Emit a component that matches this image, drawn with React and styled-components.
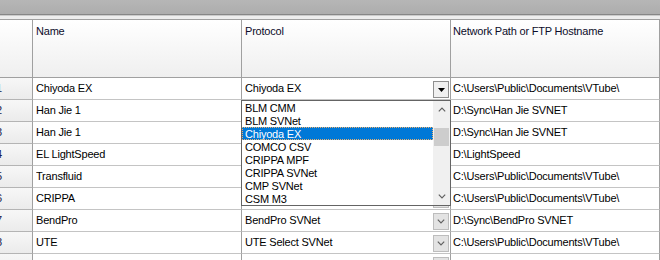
import React from 'react';
import styled, { createGlobalStyle } from 'styled-components';

const GlobalStyle = createGlobalStyle`
  html, body { margin: 0; padding: 0; overflow: hidden; background: #ffffff; }
  body {
    font-family: "Liberation Sans", Arial, sans-serif;
    font-size: 11px;
    letter-spacing: -0.2px;
    color: #000;
  }
  * { box-sizing: border-box; }
`;

const Screen = styled.div`
  width: 660px;
  height: 260px;
  overflow: hidden;
  display: flex;
  flex-direction: column;
  background: #fff;
`;

const TopStrip = styled.div`
  flex: none;
  height: 15px;
  background: linear-gradient(#b6b6b6, #adadad);
  border-bottom: 1px solid #868686;
`;

const Gutter = styled.div`
  flex: none;
  height: 4px;
  background: #ededed;
  border-top: 1px solid #cbcbcb;
`;

const Grid = styled.div`
  flex: none;
  display: grid;
  grid-template-columns: 33px 209px 209px 1fr;
  grid-template-rows: 58px;
  grid-auto-rows: 22px;
  border-top: 1px solid #a0a0a0;
`;

const HeaderCell = styled.div`
  background: linear-gradient(#ffffff, #efefef);
  border-right: 1px solid #a0a0a0;
  border-bottom: 1px solid #a0a0a0;
  padding: 4px 2px 0 ${p => p.$pad ?? 3}px;
  line-height: 14px;
  color: #0c0c2a;
  white-space: nowrap;
  overflow: hidden;
`;

const RowHeader = styled.div`
  background: linear-gradient(#f7f7f7, #ebebeb);
  border-right: 1px solid #a0a0a0;
  border-bottom: 1px solid #b4b4b4;
  line-height: 20px;
  overflow: hidden;
  white-space: nowrap;
  color: #18184a;
`;

const RowNumber = styled.span`
  display: inline-block;
  margin-left: -4px;
`;

const Cell = styled.div`
  position: relative;
  display: flex;
  align-items: flex-start;
  background: #ffffff;
  border-right: 1px solid #a0a0a0;
  border-bottom: 1px solid #c4c4c4;
  padding-left: ${p => p.$pad ?? 3}px;
`;

const CellText = styled.span`
  flex: 1;
  min-width: 0;
  line-height: 20px;
  white-space: nowrap;
  overflow: hidden;
`;

const DropButton = styled.div`
  flex: none;
  align-self: flex-end;
  width: 16px;
  height: 17px;
  margin: 0 1px 1px 0;
  display: flex;
  align-items: center;
  justify-content: center;
  background: ${p => (p.$active ? '#f0f0f0' : '#e3e3e3')};
  border: 1px solid ${p => (p.$active ? '#8f8f8f' : '#bdbdbd')};
`;

const DropList = styled.div`
  position: absolute;
  left: -1px;
  top: 22px;
  width: 210px;
  height: 106px;
  z-index: 5;
  display: flex;
  background: #ffffff;
  border: 1px solid #646464;
`;

const Items = styled.div`
  flex: 1;
  display: flex;
  flex-direction: column;
  min-width: 0;
`;

const Item = styled.div`
  height: 13px;
  padding: 1px 0 0 3px;
  line-height: 12px;
  white-space: nowrap;
  overflow: hidden;
  color: ${p => (p.$selected ? '#ffffff' : '#000000')};
  background: ${p => (p.$selected ? '#0078d7' : 'transparent')};
  outline: ${p => (p.$selected ? '1px dotted #e8b070' : 'none')};
  outline-offset: -1px;
`;

const ScrollBar = styled.div`
  flex: none;
  width: 17px;
  display: flex;
  flex-direction: column;
  background: #f0f0f0;
`;

const ScrollArrow = styled.div`
  flex: none;
  height: 17px;
  display: flex;
  align-items: center;
  justify-content: center;
`;

const Track = styled.div`
  flex: 1;
`;

const Thumb = styled.div`
  margin: 10px 1px 0;
  height: 18px;
  background: #cdcdcd;
`;

const Chevron = ({ up, color = '#606060' }) => (
  <svg width="8" height="5" viewBox="0 0 8 5">
    <polyline
      points={up ? '0.8,4.3 4,1.1 7.2,4.3' : '0.8,0.7 4,3.9 7.2,0.7'}
      fill="none"
      stroke={color}
      strokeWidth="1.2"
    />
  </svg>
);

const Triangle = () => (
  <svg width="7" height="4" viewBox="0 0 7 4">
    <polygon points="0,0 7,0 3.5,4" fill="#000" />
  </svg>
);

const protocols = [
  'BLM CMM',
  'BLM SVNet',
  'Chiyoda EX',
  'COMCO CSV',
  'CRIPPA MPF',
  'CRIPPA SVNet',
  'CMP SVNet',
  'CSM M3',
];

// Protocol values of rows 2–6 lie under the open drop-down list and are not visible.
const rows = [
  { n: 1, name: 'Chiyoda EX', protocol: 'Chiyoda EX', path: 'C:\\Users\\Public\\Documents\\VTube\\', editing: true },
  { n: 2, name: 'Han Jie 1', protocol: '', path: 'D:\\Sync\\Han Jie SVNET' },
  { n: 3, name: 'Han Jie 1', protocol: '', path: 'D:\\Sync\\Han Jie SVNET' },
  { n: 4, name: 'EL LightSpeed', protocol: '', path: 'D:\\LightSpeed' },
  { n: 5, name: 'Transfluid', protocol: '', path: 'C:\\Users\\Public\\Documents\\VTube\\' },
  { n: 6, name: 'CRIPPA', protocol: '', path: 'C:\\Users\\Public\\Documents\\VTube\\' },
  { n: 7, name: 'BendPro', protocol: 'BendPro SVNet', path: 'D:\\Sync\\BendPro SVNET' },
  { n: 8, name: 'UTE', protocol: 'UTE Select SVNet', path: 'C:\\Users\\Public\\Documents\\VTube\\' },
  { n: 9, name: 'offline', protocol: 'offline', path: 'C:\\Users\\Public\\Documents\\VTube\\' },
];

export default function App() {
  return (
    <>
      <GlobalStyle />
      <Screen>
        <TopStrip />
        <Gutter />
        <Grid>
          <HeaderCell />
          <HeaderCell>Name</HeaderCell>
          <HeaderCell>Protocol</HeaderCell>
          <HeaderCell $pad={2}>Network Path or FTP Hostname</HeaderCell>
          {rows.map(r => (
            <React.Fragment key={r.n}>
              <RowHeader>
                <RowNumber>{r.n}</RowNumber>
              </RowHeader>
              <Cell>
                <CellText>{r.name}</CellText>
              </Cell>
              <Cell>
                <CellText>{r.protocol}</CellText>
                <DropButton $active={r.editing}>
                  {r.editing ? <Triangle /> : <Chevron />}
                </DropButton>
                {r.editing && (
                  <DropList>
                    <Items>
                      {protocols.map(p => (
                        <Item key={p} $selected={p === r.protocol}>
                          {p}
                        </Item>
                      ))}
                    </Items>
                    <ScrollBar>
                      <ScrollArrow>
                        <Chevron up />
                      </ScrollArrow>
                      <Track>
                        <Thumb />
                      </Track>
                      <ScrollArrow>
                        <Chevron />
                      </ScrollArrow>
                    </ScrollBar>
                  </DropList>
                )}
              </Cell>
              <Cell $pad={2}>
                <CellText>{r.path}</CellText>
              </Cell>
            </React.Fragment>
          ))}
        </Grid>
      </Screen>
    </>
  );
}
